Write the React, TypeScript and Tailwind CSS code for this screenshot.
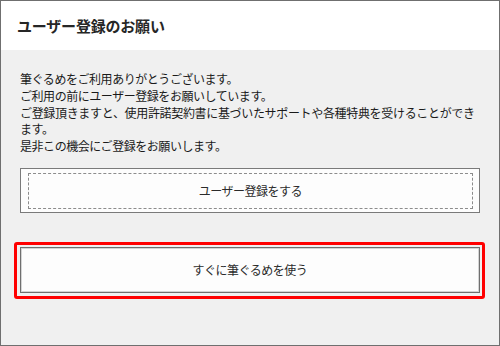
import React from "react";

export default function App() {
  const font = { fontFamily: '"Noto Sans CJK JP", "Noto Sans", sans-serif' };
  return (
    <div
      className="w-[500px] h-[346px] border border-[#6f6f6f] bg-[#f0f0f0] flex flex-col text-[#1a1a1a] [font-family:'Noto_Sans_CJK_JP','Noto_Sans',sans-serif]"
      style={font}
    >
      <div className="h-[49px] bg-white flex items-center pl-[16px]">
        <h1 className="text-[15px] font-bold tracking-[-0.2px] text-[#262626] leading-none">
          ユーザー登録のお願い
        </h1>
      </div>
      <div className="flex-1 flex flex-col px-[19px] pt-[21px]">
        <div className="text-[12px] leading-[16.75px] tracking-[-0.45px] whitespace-nowrap">
          <p>筆ぐるめをご利用ありがとうございます。</p>
          <p>ご利用の前にユーザー登録をお願いしています。</p>
          <p className="tracking-[-0.33px]">ご登録頂きますと、使用許諾契約書に基づいたサポートや各種特典を受けることができ</p>
          <p>ます。</p>
          <p>是非この機会にご登録をお願いします。</p>
        </div>
        <button className="mt-[13px] h-[45px] w-[460px] border border-[#7a7a7a] bg-[#fdfdfd] pl-[7px] pr-[6px] pt-[4px] pb-[3px] flex">
          <span className="flex-1 flex items-center justify-center border border-dashed border-[#8c8c8c] text-[12px] tracking-[-0.5px] text-[#2b2b2b]">
            ユーザー登録をする
          </span>
        </button>
        <div className="relative mt-[34px] w-[460px]">
          <div className="absolute -left-[6px] -right-[5px] -top-[5px] -bottom-[6px] border-[3px] border-[#ff0000] rounded-[3px]" />
          <button className="relative w-full h-[46px] border border-[#6f6f6f] bg-[#fdfdfd] shadow-[inset_0_0_0_1px_#d4d4d4] flex items-center justify-center text-[12px] tracking-[-0.5px] text-[#2b2b2b]">
            すぐに筆ぐるめを使う
          </button>
        </div>
      </div>
    </div>
  );
}
